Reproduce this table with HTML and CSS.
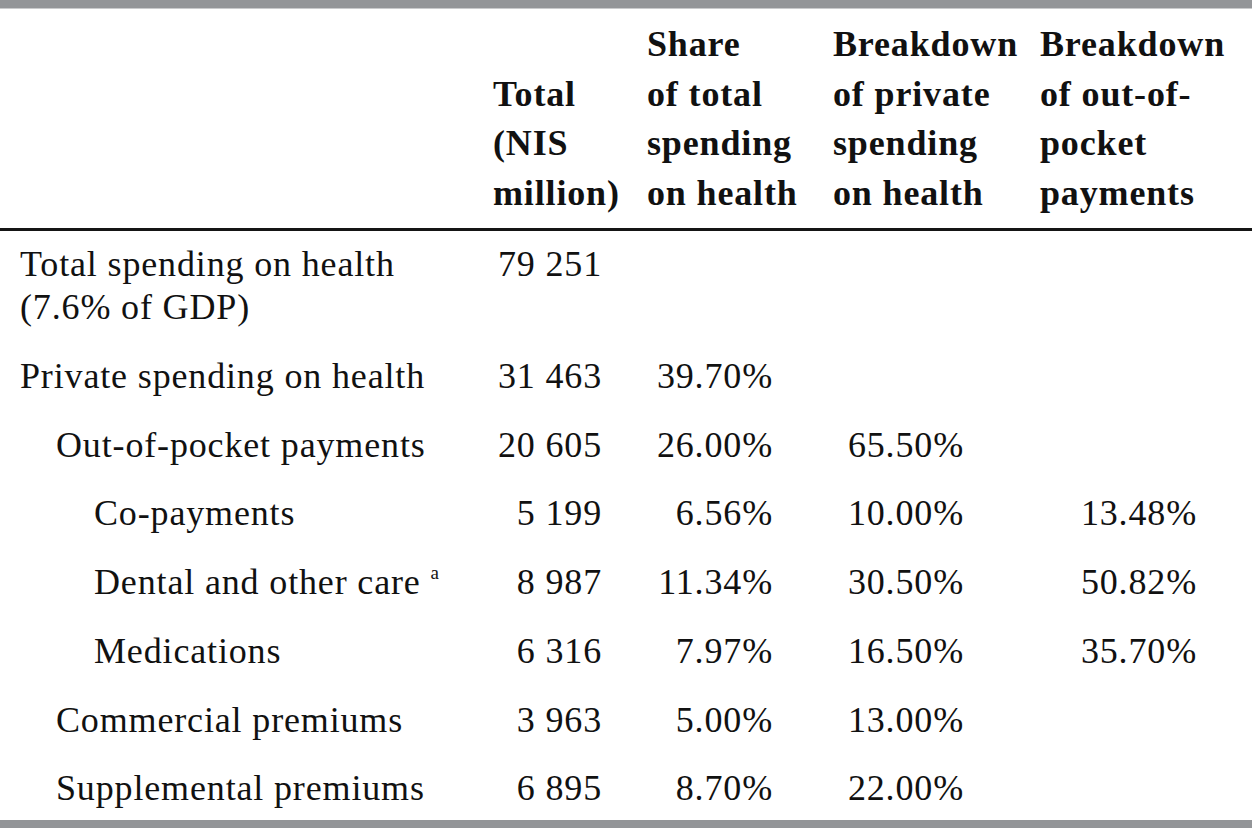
FILE: index.html
```html
<!DOCTYPE html>
<html lang="en">
<head>
<meta charset="utf-8">
<title>Private spending on health</title>
<link rel="stylesheet" href="styles.css">
</head>
<body>
<div class="frame">
  <div class="bar bar-top"></div>
  <div class="table-wrap">
  <table class="spend">
    <colgroup>
      <col class="c-label">
      <col class="c-total">
      <col class="c-share">
      <col class="c-private">
      <col class="c-oop">
    </colgroup>
    <thead>
      <tr>
        <th class="h-label"></th>
        <th class="h-total">Total<br>(NIS<br>million)</th>
        <th class="h-share">Share<br>of total<br>spending<br>on health</th>
        <th class="h-private">Breakdown<br>of private<br>spending<br>on health</th>
        <th class="h-oop">Breakdown<br>of out-of-<br>pocket<br>payments</th>
      </tr>
    </thead>
    <tbody>
      <tr class="first">
        <td class="label lvl0">Total spending on health<br>(7.6% of GDP)</td>
        <td class="num n-total">79 251</td>
        <td class="num n-share"></td>
        <td class="num n-private"></td>
        <td class="num n-oop"></td>
      </tr>
      <tr>
        <td class="label lvl0">Private spending on health</td>
        <td class="num n-total">31 463</td>
        <td class="num n-share">39.70%</td>
        <td class="num n-private"></td>
        <td class="num n-oop"></td>
      </tr>
      <tr>
        <td class="label lvl1">Out-of-pocket payments</td>
        <td class="num n-total">20 605</td>
        <td class="num n-share">26.00%</td>
        <td class="num n-private">65.50%</td>
        <td class="num n-oop"></td>
      </tr>
      <tr>
        <td class="label lvl2">Co-payments</td>
        <td class="num n-total">5 199</td>
        <td class="num n-share">6.56%</td>
        <td class="num n-private">10.00%</td>
        <td class="num n-oop">13.48%</td>
      </tr>
      <tr>
        <td class="label lvl2">Dental and other care <sup class="note">a</sup></td>
        <td class="num n-total">8 987</td>
        <td class="num n-share">11.34%</td>
        <td class="num n-private">30.50%</td>
        <td class="num n-oop">50.82%</td>
      </tr>
      <tr>
        <td class="label lvl2">Medications</td>
        <td class="num n-total">6 316</td>
        <td class="num n-share">7.97%</td>
        <td class="num n-private">16.50%</td>
        <td class="num n-oop">35.70%</td>
      </tr>
      <tr>
        <td class="label lvl1">Commercial premiums</td>
        <td class="num n-total">3 963</td>
        <td class="num n-share">5.00%</td>
        <td class="num n-private">13.00%</td>
        <td class="num n-oop"></td>
      </tr>
      <tr>
        <td class="label lvl1">Supplemental premiums</td>
        <td class="num n-total">6 895</td>
        <td class="num n-share">8.70%</td>
        <td class="num n-private">22.00%</td>
        <td class="num n-oop"></td>
      </tr>
    </tbody>
  </table>
  </div>
  <div class="bar bar-bottom"></div>
</div>
</body>
</html>
```

FILE: styles.css
```css
html, body {
  margin: 0;
  padding: 0;
  background: #ffffff;
}

body {
  font-family: "Liberation Serif", "Times New Roman", serif;
  color: #111111;
}

.frame {
  width: 1252px;
  height: 828px;
  display: grid;
  grid-template-rows: 9px 1fr 8px;
  overflow: hidden;
}

.bar {
  background: #939598;
}

.bar-top {
  border-bottom: 1px solid #c9cacc;
}

.table-wrap {
  overflow: hidden;
  min-height: 0;
}

.spend {
  width: 1252px;
  border-collapse: collapse;
  table-layout: fixed;
  font-size: 36px;
  letter-spacing: 0.85px;
}

.c-label { width: 478px; }
.c-total { width: 150px; }
.c-share { width: 189px; }
.c-private { width: 213px; }
.c-oop { width: 222px; }

thead th {
  font-weight: bold;
  text-align: left;
  vertical-align: bottom;
  line-height: 49.5px;
  padding: 11px 0 10px 0;
  border-bottom: 3px solid #151515;
  white-space: nowrap;
}

.h-total { padding-left: 15px; }
.h-share { padding-left: 19px; }
.h-private { padding-left: 16px; }
.h-oop { padding-left: 10px; }

tbody td {
  line-height: 42.7px;
  vertical-align: top;
  padding-top: 12px;
  padding-bottom: 14px;
  white-space: nowrap;
}

tbody .first td {
  line-height: 42.5px;
  padding-bottom: 15px;
}

.label { text-align: left; }
.lvl0 { padding-left: 20px; }
.lvl1 { padding-left: 56px; }
.lvl2 { padding-left: 94px; }

.num { text-align: right; }
.n-total { padding-right: 26px; }
.n-share { padding-right: 44px; }
.n-private { padding-right: 66px; }
.n-oop { padding-right: 55px; }

.note {
  font-size: 19px;
  line-height: 0;
  vertical-align: 15px;
  letter-spacing: 0;
}
```
